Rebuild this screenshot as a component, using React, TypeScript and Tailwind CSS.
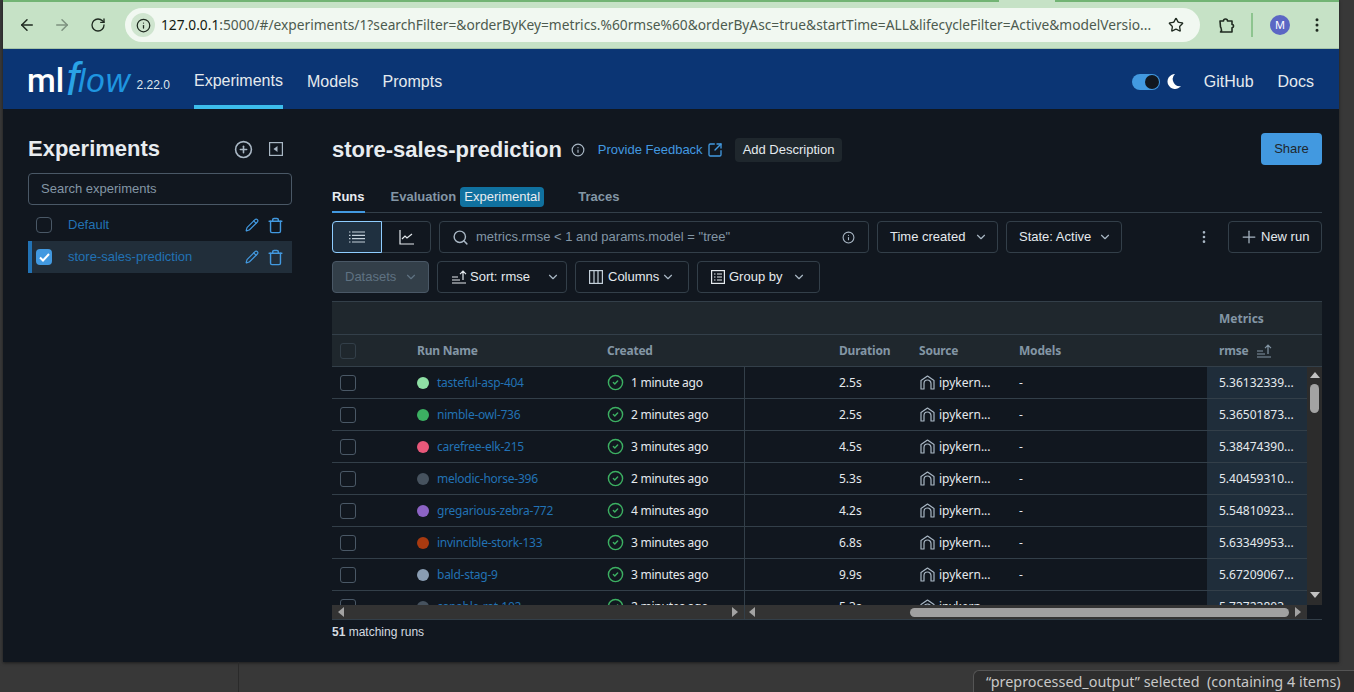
import React from 'react';
import {
    ArrowLeft,
    ArrowRight,
    ChevronDown,
    CircleCheck,
    EllipsisVertical,
    Info,
    Pencil,
    Plus,
    CirclePlus,
    RotateCw,
    Search,
    SquareArrowOutUpRight,
    Star,
    Trash,
} from 'lucide-react';

const runs = [
    { name: 'tasteful-asp-404', dot: 'bg-[#8fe0a5]', created: '1 minute ago', duration: '2.5s', rmse: '5.36132339...' },
    { name: 'nimble-owl-736', dot: 'bg-[#3cb062]', created: '2 minutes ago', duration: '2.5s', rmse: '5.36501873...' },
    { name: 'carefree-elk-215', dot: 'bg-[#e8587a]', created: '3 minutes ago', duration: '4.5s', rmse: '5.38474390...' },
    { name: 'melodic-horse-396', dot: 'bg-[#46525e]', created: '2 minutes ago', duration: '5.3s', rmse: '5.40459310...' },
    { name: 'gregarious-zebra-772', dot: 'bg-[#8c63c4]', created: '4 minutes ago', duration: '4.2s', rmse: '5.54810923...' },
    { name: 'invincible-stork-133', dot: 'bg-[#a83a10]', created: '3 minutes ago', duration: '6.8s', rmse: '5.63349953...' },
    { name: 'bald-stag-9', dot: 'bg-[#8a9db3]', created: '3 minutes ago', duration: '9.9s', rmse: '5.67209067...' },
    { name: 'capable-rat-102', dot: 'bg-[#46525e]', created: '2 minutes ago', duration: '5.3s', rmse: '5.73723803...' },
];

function SortIcon({ className }: { className?: string }) {
    return (
        <svg width="16" height="14" viewBox="0 0 16 14" fill="none" stroke="currentColor" strokeWidth="1.2" className={className}>
            <path d="M1 7h6M1 10h8M1 13h14M12 10V1.5M9 4.2l3-3 3 3" />
        </svg>
    );
}

function SourceIcon() {
    return (
        <svg width="15" height="15" viewBox="0 0 15 15" fill="none" stroke="#a9b7c4" strokeWidth="1.2" strokeLinejoin="round" className="shrink-0">
            <path d="M1 14V5.5L7.5 1 14 5.5V14h-3V8.5a3.5 3.5 0 0 0-7 0V14z" />
        </svg>
    );
}

function Dropdown({ label, className }: { label: string; className: string }) {
    return (
        <button className={`h-8 flex items-center justify-between border border-[#333f49] rounded pl-3 pr-[9px] text-[13px] text-[#e5eaee] ${className}`}>
            <span>{label}</span>
            <ChevronDown size={14} className="text-[#a9b7c4]" />
        </button>
    );
}

function ScrollArrow({ dir, className }: { dir: 'left' | 'right'; className?: string }) {
    return (
        <span
            className={`w-0 h-0 border-y-[5px] border-y-transparent ${dir === 'left' ? 'border-r-[6px] border-r-[#a3a3a3]' : 'border-l-[6px] border-l-[#a3a3a3]'} ${className ?? ''}`}
        />
    );
}

function BrowserBar() {
    return (
        <div className="shrink-0 h-[49px] flex flex-col bg-[#c6e2c6] border-b border-[#a5c4a8]">
            <div className="h-[2px] flex shrink-0">
                <div className="w-[996px] bg-[#72b474]" />
                <div className="w-[56px]" />
                <div className="flex-1 bg-[#72b474]" />
            </div>
            <div className="flex-1 flex items-center font-['Noto_Sans',sans-serif]">
                <div className="w-[122px] flex items-center text-[#1f2a20]">
                    <ArrowLeft size={18} className="ml-[15px]" />
                    <ArrowRight size={18} className="ml-[17px] text-[#7d917f]" />
                    <RotateCw size={16} className="ml-[19px]" />
                </div>
                <div className="w-[1075px] h-[34px] rounded-full bg-[#f1f8f1] flex items-center pl-[6px]">
                    <div className="w-6 h-6 rounded-full bg-[#cfe5cf] flex items-center justify-center shrink-0">
                        <Info size={15} className="text-[#1f2a20]" />
                    </div>
                    <div className="ml-[6px] w-[993px] text-[13.75px] whitespace-nowrap text-[#4d5b4f]">
                        <span className="text-[#121a13]">127.0.0.1</span>
                        :5000/#/experiments/1?searchFilter=&amp;orderByKey=metrics.%60rmse%60&amp;orderByAsc=true&amp;startTime=ALL&amp;lifecycleFilter=Active&amp;modelVersio...
                    </div>
                    <Star size={16} className="ml-[14px] text-[#1f2a20]" />
                </div>
                <svg width="18" height="18" viewBox="0 0 18 18" fill="none" stroke="#1f2a20" strokeWidth="1.6" strokeLinejoin="round" className="ml-[18px]">
                    <path d="M2 5h3.5a2 2 0 0 1 4 0H14v3.5a1.6 1.6 0 0 1 0 3.2V16H2.5a3 3 0 0 0 .7-3.5 3 3 0 0 0-.7-1.5z" />
                </svg>
                <div className="ml-[15px] w-[2px] h-6 bg-[#8dc48f]" />
                <div className="ml-[17px] w-5 h-5 rounded-full bg-[#5b67c4] text-white text-[11px] flex items-center justify-center">M</div>
                <EllipsisVertical size={18} className="ml-[18px] text-[#1f2a20]" />
            </div>
        </div>
    );
}

function NavBar() {
    return (
        <div className="shrink-0 h-[60px] bg-[#0b3574] flex items-stretch pl-[24px] pr-[25px] text-[16px] text-[#e5eaee]">
            <div className="flex items-center w-[167px] pt-[3px]">
                <span className="font-['Roboto',sans-serif] text-[33px] leading-none font-medium text-white">ml</span>
                <span className="font-['Liberation_Sans',sans-serif] italic text-[46px] leading-none text-[#2aa3e6] ml-[2px] mt-[-3px]">f</span>
                <span className="font-['Liberation_Sans',sans-serif] italic text-[33px] leading-none text-[#1f96e0] ml-[-1px] tracking-[1px]">low</span>
                <span className="text-[12px] ml-[6px] mt-[9px] text-[#dfe6ec]">2.22.0</span>
            </div>
            <div className="border-b-4 border-[#3cbdec] flex items-center w-[89px] pt-[8px]">Experiments</div>
            <div className="ml-[24px] flex items-center pt-[5px]">Models</div>
            <div className="ml-[24px] flex items-center pt-[5px]">Prompts</div>
            <div className="flex-1" />
            <div className="flex items-center pt-[5px]">
                <div className="w-7 h-4 rounded-full bg-[#4299e0] flex items-center justify-end pr-[1px]">
                    <div className="w-[14px] h-[14px] rounded-full bg-[#11171f]" />
                </div>
                <svg width="14" height="15" viewBox="0 0 14 15" className="ml-[7px]" fill="#ffffff">
                    <path d="M8 0a7.5 7.5 0 1 0 6 12A7 7 0 0 1 8 0z" />
                </svg>
                <span className="ml-[23px]">GitHub</span>
                <span className="ml-[24px]">Docs</span>
            </div>
        </div>
    );
}

function Sidebar() {
    return (
        <div className="w-[264px] shrink-0 mr-[40px] pt-[24px]">
            <div className="h-[32px] flex items-center">
                <h2 className="text-[22px] font-bold text-[#e8ecf0] flex-1 mt-[-2px]">Experiments</h2>
                <CirclePlus size={19} className="text-[#a9b7c4] mr-[16px]" />
                <svg width="14" height="14" viewBox="0 0 14 14" className="mr-[9px] text-[#a9b7c4]" fill="none" stroke="currentColor" strokeWidth="1.2">
                    <rect x="0.6" y="0.6" width="12.8" height="12.8" />
                    <path d="M8.5 4v6L4.5 7z" fill="currentColor" stroke="none" />
                </svg>
            </div>
            <div className="mt-[8px] h-8 border border-[#4a5866] rounded flex items-center px-3 text-[13px] text-[#8396a5]">Search experiments</div>
            <div className="mt-1 h-8 flex items-center text-[13px] text-[#2272b4]">
                <div className="ml-2 w-4 h-4 rounded border border-[#4a5866]" />
                <span className="ml-4 flex-1">Default</span>
                <Pencil size={14} className="text-[#4299e0] mr-[8px]" />
                <Trash size={17} className="text-[#4299e0] mr-[8px]" />
            </div>
            <div className="h-8 flex items-center text-[13px] text-[#2272b4] bg-[#212e3a] border-l-4 border-[#2272b4]">
                <div className="ml-1 w-4 h-4 rounded bg-[#4299e0] flex items-center justify-center">
                    <svg width="11" height="9" viewBox="0 0 11 9" fill="none" stroke="#ffffff" strokeWidth="2">
                        <path d="M1 4.5l3 3L10 1" />
                    </svg>
                </div>
                <span className="ml-4 flex-1">store-sales-prediction</span>
                <Pencil size={14} className="text-[#4299e0] mr-[8px]" />
                <Trash size={17} className="text-[#4299e0] mr-[8px]" />
            </div>
        </div>
    );
}

function RunsTable() {
    return (
        <div className="mt-2 border-t border-[#333f49] font-['Noto_Sans',sans-serif] text-[12px]">
            <div className="h-[33px] bg-[#1f272d] border-b border-[#333f49] flex items-center justify-end pt-[2px]">
                <span className="w-[103px] font-bold text-[#8396a5]">Metrics</span>
            </div>
            <div className="h-[32px] bg-[#1f272d] border-b border-[#333f49] grid grid-cols-[85px_190px_232px_80px_100px_188px_1fr] font-bold text-[#8396a5] tracking-[-0.2px]">
                <div className="flex items-center pl-2">
                    <div className="w-4 h-4 rounded-[3px] border border-[#333f49]" />
                </div>
                <div className="flex items-center">Run Name</div>
                <div className="flex items-center">Created</div>
                <div className="flex items-center">Duration</div>
                <div className="flex items-center">Source</div>
                <div className="flex items-center">Models</div>
                <div className="flex items-center pl-3">
                    rmse
                    <SortIcon className="ml-2" />
                </div>
            </div>
            <div className="relative h-[238px] overflow-hidden">
                <div className="w-[975px]">
                    {runs.map((run) => (
                        <div key={run.name} className="h-8 border-b border-[#333f49] grid grid-cols-[85px_190px_138px_94px_80px_100px_188px_100px] text-[#e5eaee]">
                            <div className="flex items-center pl-2">
                                <div className="w-4 h-4 rounded-[3px] border border-[#4a5866]" />
                            </div>
                            <div className="flex items-center">
                                <span className={`w-3 h-3 rounded-full ${run.dot}`} />
                                <span className="ml-2 text-[#2272b4] tracking-[-0.25px]">{run.name}</span>
                            </div>
                            <div className="flex items-center border-r border-[#333f49]">
                                <CircleCheck size={17} className="text-[#3cb062]" />
                                <span className="ml-[7px] tracking-[-0.25px]">{run.created}</span>
                            </div>
                            <div />
                            <div className="flex items-center">{run.duration}</div>
                            <div className="flex items-center pl-px">
                                <SourceIcon />
                                <span className="ml-[4px]">ipykern...</span>
                            </div>
                            <div className="flex items-center">-</div>
                            <div className="flex items-center bg-[#1f2d3a] pl-3">{run.rmse}</div>
                        </div>
                    ))}
                </div>
                <div className="absolute right-0 top-0 bottom-0 w-[15px] bg-[#2c2c2c] flex flex-col items-center">
                    <span className="mt-[5px] w-0 h-0 border-x-[5px] border-x-transparent border-b-[6px] border-b-[#c2c2c2]" />
                    <div className="mt-[6px] w-[9px] h-[29px] rounded-full bg-[#a3a3a3]" />
                    <div className="flex-1" />
                    <span className="mb-[7px] w-0 h-0 border-x-[5px] border-x-transparent border-t-[6px] border-t-[#c2c2c2]" />
                </div>
            </div>
            <div className="h-[15px] border-b border-[#333f49] flex items-center">
                <div className="w-[413px] h-full bg-[#333333] border-r border-[#333f49] flex items-center justify-between px-[6px]">
                    <ScrollArrow dir="left" />
                    <ScrollArrow dir="right" />
                </div>
                <div className="w-[562px] h-full bg-[#333333] flex items-center pl-[4px]">
                    <ScrollArrow dir="left" />
                    <div className="ml-[155px] w-[379px] h-[9px] rounded-full bg-[#a0a0a0]" />
                    <ScrollArrow dir="right" className="ml-[6px]" />
                </div>
            </div>
        </div>
    );
}

function MainPanel() {
    return (
        <div className="w-[990px] shrink-0 pt-[24px]">
            <div className="h-8 flex items-center">
                <h1 className="text-[22px] font-bold text-[#e8ecf0]">store-sales-prediction</h1>
                <Info size={14} className="ml-[9px] mt-[2px] text-[#a9b7c4]" />
                <span className="ml-[13px] mt-[2px] text-[13px] text-[#4299e0]">Provide Feedback</span>
                <SquareArrowOutUpRight size={16} className="ml-[4px] mt-[2px] text-[#4299e0]" />
                <span className="ml-[12px] mt-[2px] h-6 px-2 flex items-center rounded bg-[#1f272d] text-[13px] text-[#e5eaee]">Add Description</span>
                <div className="flex-1" />
                <button className="h-8 w-[61px] rounded bg-[#4299e0] text-[13px] text-[#1f272d]">Share</button>
            </div>
            <div className="mt-4 h-[32px] border-b border-[#333f49] flex items-start text-[13px] font-bold text-[#8396a5]">
                <div className="h-[32px] pt-[6px] border-b-2 border-[#4299e0] text-[#e8ecf0]">Runs</div>
                <div className="ml-[26px] pt-[6px]">Evaluation</div>
                <div className="ml-[4px] mt-[6px] h-5 w-[84px] rounded bg-[#10719f] flex items-center justify-center font-normal text-[#e8ecf0]">Experimental</div>
                <div className="ml-[34px] pt-[6px]">Traces</div>
            </div>
            <div className="mt-2 h-8 flex items-center text-[13px] text-[#e5eaee]">
                <div className="w-[99px] h-8 flex border border-[#333f49] rounded">
                    <div className="-m-px w-[50px] h-8 bg-[#1f3040] border border-[#8fcdff] rounded-l flex items-center justify-center">
                        <svg width="16" height="12" viewBox="0 0 16 12" stroke="#c4d0da" strokeWidth="1.2">
                            <path d="M0 1h1.5M3 1h13M0 4.3h1.5M3 4.3h13M0 7.6h1.5M3 7.6h13M0 11h1.5M3 11h13" />
                        </svg>
                    </div>
                    <div className="flex-1 flex items-center justify-center pl-[2px]">
                        <svg width="15" height="15" viewBox="0 0 15 15" fill="none" stroke="#e5eaee" strokeWidth="1.2">
                            <path d="M1 0v14h14M3 9l3-3 2 2 5-4" />
                        </svg>
                    </div>
                </div>
                <div className="ml-2 w-[430px] h-8 border border-[#333f49] rounded flex items-center pl-3 pr-[13px] text-[#8396a5]">
                    <Search size={17} className="text-[#a9b7c4]" />
                    <span className="ml-[7px] flex-1">metrics.rmse &lt; 1 and params.model = "tree"</span>
                    <Info size={13} className="text-[#a9b7c4]" />
                </div>
                <Dropdown label="Time created" className="ml-2 w-[121px]" />
                <Dropdown label="State: Active" className="ml-2 w-[116px]" />
                <EllipsisVertical size={16} className="ml-[74px] text-[#a9b7c4]" />
                <button className="ml-[16px] w-[94px] h-8 border border-[#333f49] rounded flex items-center pl-[10px]">
                    <Plus size={20} strokeWidth={1.5} className="text-[#a9b7c4]" />
                    <span className="ml-[2px]">New run</span>
                </button>
            </div>
            <div className="mt-2 h-8 flex items-center text-[13px] text-[#e5eaee]">
                <button className="w-[97px] h-8 rounded bg-[#333f49] border border-[#4a5866] flex items-center justify-between pl-3 pr-[10px] text-[#5f7282]">
                    <span>Datasets</span>
                    <ChevronDown size={14} />
                </button>
                <button className="ml-2 w-[130px] h-8 border border-[#333f49] rounded flex items-center pl-[13px]">
                    <SortIcon />
                    <span className="ml-[3px]">Sort: rmse</span>
                    <ChevronDown size={14} className="ml-[16px] text-[#a9b7c4]" />
                </button>
                <button className="ml-2 w-[114px] h-8 border border-[#333f49] rounded flex items-center pl-[13px]">
                    <svg width="14" height="14" viewBox="0 0 14 14" fill="none" stroke="#c4d0da" strokeWidth="1.2">
                        <rect x="0.6" y="0.6" width="12.8" height="12.8" />
                        <path d="M5 0.6v12.8M9 0.6v12.8" />
                    </svg>
                    <span className="ml-[5px]">Columns</span>
                    <ChevronDown size={14} className="ml-[2px] text-[#a9b7c4]" />
                </button>
                <button className="ml-2 w-[123px] h-8 border border-[#333f49] rounded flex items-center pl-[13px]">
                    <svg width="14" height="14" viewBox="0 0 14 14" fill="none" stroke="#e5eaee" strokeWidth="1.2">
                        <rect x="0.6" y="0.6" width="12.8" height="12.8" />
                        <path d="M3 4h1.5M6 4h5M3 7h1.5M6 7h5M3 10h1.5M6 10h5" />
                    </svg>
                    <span className="ml-[4px]">Group by</span>
                    <ChevronDown size={14} className="ml-[10px] text-[#a9b7c4]" />
                </button>
            </div>
            <RunsTable />
            <div className="mt-[3px] text-[12px] text-[#d5dbe0]">
                <span className="font-bold">51</span> matching runs
            </div>
        </div>
    );
}

export default function App() {
    return (
        <div className="relative w-[1354px] h-[692px] overflow-hidden bg-[#383838] font-['Liberation_Sans',Arial,sans-serif]">
            <div className="ml-[3px] w-[1336px] h-[662px] flex flex-col bg-[#11171f] shadow-[0_1px_3px_rgba(0,0,0,0.5)]">
                <BrowserBar />
                <NavBar />
                <div className="flex-1 flex pl-[25px] min-h-0">
                    <Sidebar />
                    <MainPanel />
                </div>
            </div>
            <div className="ml-[238px] w-px h-[30px] bg-[#2a2a2a]" />
            {/* nautilus status popup sits over the desktop */}
            <div className="absolute left-[973px] top-[670px] w-[381px] h-[22px] bg-[#2e2e2e] border-t border-l border-[#555555] rounded-tl-md pl-3 font-['Noto_Sans',sans-serif] text-[14.4px] leading-[22px] text-[#c8c8c8] whitespace-pre">
                “preprocessed_output” selected  (containing 4 items)
            </div>
        </div>
    );
}
